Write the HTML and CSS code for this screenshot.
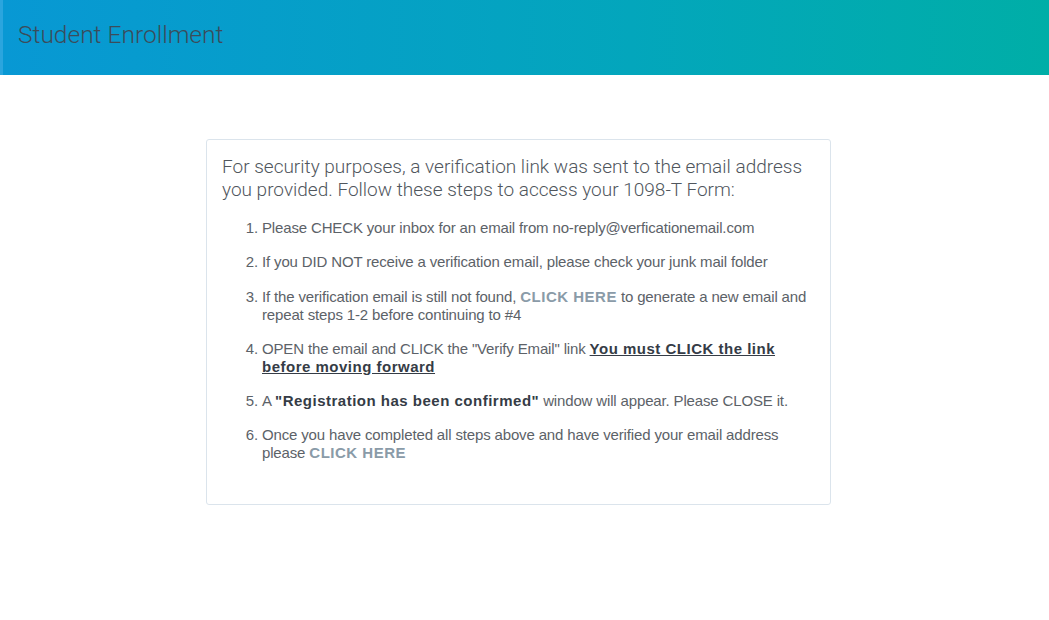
FILE: index.html
```html
<!DOCTYPE html>
<html>
<head>
<meta charset="utf-8">
<link rel="stylesheet" href="styles.css">
</head>
<body>
<header class="topbar">
  <h1 class="title">Student Enrollment</h1>
</header>
<main class="main">
  <section class="card">
    <p class="intro">For security purposes, a verification link was sent to the email address you provided. Follow these steps to access your 1098-T Form:</p>
    <ol class="steps">
      <li>Please CHECK your inbox for an email from no-reply@verficationemail.com</li>
      <li>If you DID NOT receive a verification email, please check your junk mail folder</li>
      <li>If the verification email is still not found, <a class="link" href="#">CLICK HERE</a> to generate a new email and repeat steps 1-2 before continuing to #4</li>
      <li>OPEN the email and CLICK the "Verify Email" link <strong class="must">You must CLICK the link before moving forward</strong></li>
      <li>A <strong class="strong">"Registration has been confirmed"</strong> window will appear. Please CLOSE it.</li>
      <li>Once you have completed all steps above and have verified your email address please <a class="link" href="#">CLICK HERE</a></li>
    </ol>
  </section>
</main>
</body>
</html>
```
FILE: styles.css
```css
html, body {
  margin: 0;
  padding: 0;
  background: #fff;
  font-family: "Roboto", "Liberation Sans", Arial, sans-serif;
}
.topbar {
  height: 75px;
  background: linear-gradient(90deg, #0898d4 0%, #03a6bc 60%, #00aea7 100%);
  border-left: 3px solid #2aa5de;
  box-sizing: border-box;
  display: flex;
  align-items: center;
  padding-left: 15px;
}
.title {
  margin: 0;
  font-weight: 300;
  font-size: 24.5px;
  color: #3c4c5a;
  position: relative;
  top: -3px;
}
.main {
  display: flex;
  justify-content: center;
  padding-top: 64px;
  padding-right: 12px;
}
.card {
  width: 625px;
  height: 366px;
  box-sizing: border-box;
  border: 1px solid #dbe4ec;
  border-radius: 3px;
  padding: 15px 15px 0 15px;
}
.intro {
  margin: 0;
  font-size: 19px;
  line-height: 23px;
  color: #50565d;
  font-weight: 300;
}
.steps {
  margin: 18px 0 0 0;
  padding-left: 40px;
  font-family: "Liberation Sans", Arial, sans-serif;
  font-size: 15px;
  line-height: 18px;
  letter-spacing: -0.15px;
  color: #5c6268;
}
.steps li {
  margin-bottom: 16.25px;
}
.link {
  color: #8a9ba8;
  font-weight: bold;
  letter-spacing: 0.5px;
  text-decoration: none;
}
.must {
  color: #353c46;
  font-weight: bold;
  letter-spacing: 0.5px;
  text-decoration: underline;
}
.strong {
  color: #353c46;
  font-weight: bold;
  letter-spacing: 0.5px;
}
```
